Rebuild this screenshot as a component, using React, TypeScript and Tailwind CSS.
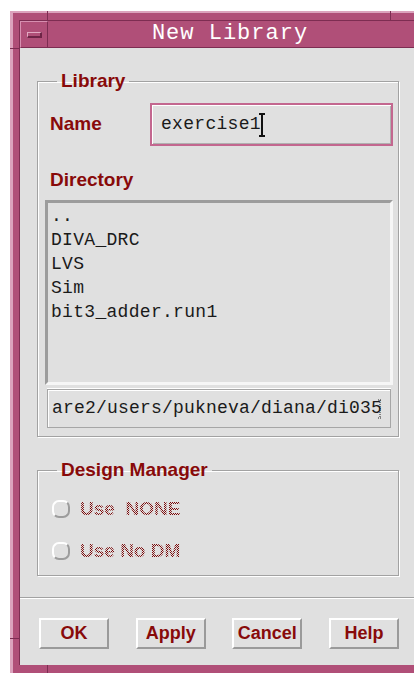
const sans = "font-['Liberation_Sans',Arial,sans-serif]";
const mono = "font-['Liberation_Mono','Courier_New',monospace]";

const dirs = ["..", "DIVA_DRC", "LVS", "Sim", "bit3_adder.run1"];
const buttons = ["OK", "Apply", "Cancel", "Help"];

const Tick = ({ className }: { className: string }) => (
  <span className={`absolute bg-[#7d2d52] ${className}`} />
);

const Radio = ({ label }: { label: string }) => (
  <div className="flex items-center h-[24px] gap-[10px]">
    <span className="w-[18px] h-[18px] rounded-[7px] border-2 border-t-white border-l-white border-r-[#9c9c9c] border-b-[#9c9c9c]" />
    <span
      className={`${sans} text-[19px] leading-[24px] font-bold whitespace-pre text-transparent bg-clip-text bg-[conic-gradient(#7a0808_25%,transparent_0_50%,#7a0808_0_75%,transparent_0)] bg-[length:2px_2px]`}
    >
      {label}
    </span>
  </div>
);

const Legend = ({ children, className }: { children: string; className: string }) => (
  <legend className={`${sans} px-[4px] text-[19px] leading-[20px] font-bold text-[#880a0a] ${className}`}>
    {children}
  </legend>
);

export default function App() {
  return (
    <div className="w-[414px] h-[673px] overflow-hidden bg-white pt-[11px] pl-[10px]">
      <div className="relative w-[410px] h-[662px] bg-[#b04f78] border-l-[3px] border-t-[2px] border-[#dca3bd] pt-[7px] pl-[6px] pb-[8px] flex flex-col">
        {/* frame resize notches */}
        <Tick className="left-[34px] top-[-2px] w-[1px] h-[9px]" />
        <Tick className="left-[377px] top-[-2px] w-[1px] h-[9px]" />
        <Tick className="left-[-3px] top-[35px] h-[1px] w-[9px]" />
        <Tick className="left-[-3px] top-[625px] h-[1px] w-[9px]" />
        <Tick className="left-[34px] bottom-0 w-[1px] h-[8px]" />

        <div className="flex-1 flex flex-col border-l border-t border-[#7d2d52]">
          {/* title bar */}
          <div className="h-[27px] flex">
            <div className="w-[28px] h-full border-t border-l border-[#d78fb0] border-r border-r-[#7d2d52] border-b border-b-[#7d2d52] flex items-center justify-center">
              <span className="w-[15px] h-[6px] border-t border-l border-[#e2a9c2] border-r-2 border-b-2 border-r-[#6e2446] border-b-[#6e2446]" />
            </div>
            <div className="flex-1 flex items-center justify-center border-b border-[#7d2d52]">
              <span className={`${mono} text-[22px] leading-[26px] tracking-[1px] text-white pr-[8px]`}>
                New Library
              </span>
            </div>
          </div>

          {/* dialog body */}
          <div className="flex-1 bg-[#e0e0e0] flex flex-col">
            <fieldset className="mt-[23px] ml-[17px] w-[362px] min-w-0 border border-[#a2a2a2] shadow-[inset_1px_1px_0_#fff,1px_1px_0_#fff] pl-[7px] pr-[5px] pb-[8px]">
              <Legend className="ml-[12px]">Library</Legend>
              <div className="flex items-center pt-[12px]">
                <div className={`${sans} w-[105px] pl-[5px] text-[19px] font-bold text-[#880a0a]`}>Name</div>
                <div className="w-[243px] h-[43px] border-2 border-[#c3678f] shadow-[inset_1px_1px_0_#fff,inset_-1px_-1px_0_#b0b0b0] flex items-center pl-[9px]">
                  <span className={`${mono} text-[18px] tracking-[0.3px] text-[#1a1a1a]`}>exercise1</span>
                  <svg width="8" height="24" viewBox="0 0 8 24" className="-ml-[3px]">
                    <path d="M1 1h6M4 1v22M1 23h6" stroke="#111" strokeWidth="2" fill="none" />
                  </svg>
                </div>
              </div>

              <div className={`${sans} mt-[24px] pl-[5px] text-[19px] leading-[20px] font-bold text-[#880a0a]`}>
                Directory
              </div>

              <div className="mt-[10px] h-[185px] border-[3px] border-t-[#9c9c9c] border-l-[#9c9c9c] border-r-[#f6f6f6] border-b-[#f6f6f6] pt-[1px] pl-[3px]">
                {dirs.map((d) => (
                  <div key={d} className={`${mono} text-[18px] leading-[24px] tracking-[0.3px] text-[#1a1a1a]`}>
                    {d}
                  </div>
                ))}
              </div>

              <div className="mt-[4px] mx-[2px] w-[344px] h-[39px] border border-[#a6a6a6] shadow-[inset_1px_1px_0_#fff,0_-1px_0_#fff] flex items-center justify-end overflow-hidden pr-[7px]">
                <span className={`${mono} text-[18px] tracking-[0.2px] text-[#1a1a1a] whitespace-nowrap`}>
                  are2/users/pukneva/diana/di035
                </span>
                <svg width="6" height="20" viewBox="0 0 6 20" className="-ml-[5px] shrink-0">
                  <path d="M1 1h4M3 1v18M1 19h4" stroke="#222" strokeWidth="1" strokeDasharray="1 1" fill="none" />
                </svg>
              </div>
            </fieldset>

            <fieldset className="mt-[23px] ml-[17px] w-[362px] min-w-0 border border-[#a2a2a2] shadow-[inset_1px_1px_0_#fff,1px_1px_0_#fff] pl-[14px] pt-[17px] pb-[12px] flex flex-col gap-[18px]">
              <Legend className="ml-[5px]">Design Manager</Legend>
              <Radio label="Use  NONE" />
              <Radio label="Use No DM" />
            </fieldset>

            <div className="mt-[21px] h-[2px] border-t border-[#a2a2a2] border-b border-b-white" />

            <div className="mt-[19px] ml-[19px] w-[360px] flex justify-between">
              {buttons.map((b) => (
                <button
                  key={b}
                  className={`${sans} w-[70px] h-[31px] border-2 border-t-white border-l-white border-r-[#9a9a9a] border-b-[#9a9a9a] text-[18px] font-bold text-[#880a0a] flex items-center justify-center`}
                >
                  {b}
                </button>
              ))}
            </div>
          </div>
        </div>
      </div>
    </div>
  );
}
